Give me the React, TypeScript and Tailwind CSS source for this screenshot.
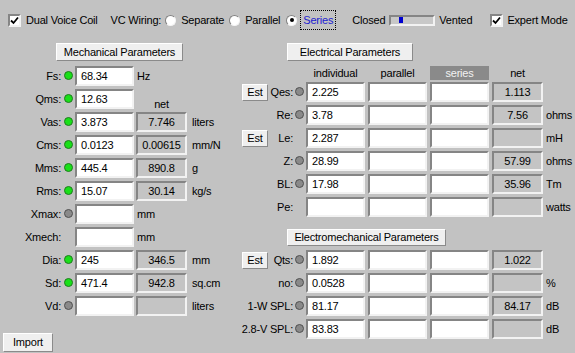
import type { FC, ReactNode } from 'react';

const sunken =
  'border-2 border-t-[#858585] border-l-[#858585] border-r-[#f2f2f2] border-b-[#f2f2f2]';

type LedKind = 'g' | 'x' | 'none';

const Led: FC<{ kind: LedKind }> = ({ kind }) => {
  if (kind === 'none') return <span className="inline-block h-[9px] w-[9px] shrink-0" />;
  return (
    <span
      className={
        kind === 'g'
          ? 'inline-block h-[9px] w-[9px] shrink-0 rounded-full border border-[#1f7a1f] bg-[#19e019]'
          : 'inline-block h-[9px] w-[9px] shrink-0 rounded-full border border-[#505050] bg-[#8a8a8a]'
      }
    />
  );
};

const Field: FC<{ value?: string; w?: string }> = ({ value = '', w = 'w-[59px]' }) => (
  <div className={`${sunken} ${w} flex h-[20px] shrink-0 items-center bg-white pl-[4px] leading-none`}>
    {value}
  </div>
);

const Net: FC<{ value?: string; w?: string }> = ({ value = '', w = 'w-[51px]' }) => (
  <div className={`${sunken} ${w} flex h-[20px] shrink-0 items-center justify-center bg-[#c4c4c4] leading-none`}>
    {value}
  </div>
);

const Btn: FC<{ children: ReactNode; className?: string }> = ({ children, className = '' }) => (
  <div
    className={`flex items-center justify-center border border-t-white border-l-white border-r-[#8a8a8a] border-b-[#8a8a8a] bg-[#efefef] leading-none ${className}`}
  >
    {children}
  </div>
);

const Check: FC = () => (
  <span className={`${sunken} flex h-[13px] w-[13px] items-center justify-center bg-white`}>
    <svg width="9" height="9" viewBox="0 0 9 9">
      <path d="M1 4.5 L3.5 7 L8 1.5" stroke="#000" strokeWidth="1.8" fill="none" />
    </svg>
  </span>
);

const Radio: FC<{ on?: boolean }> = ({ on }) => (
  <span className="flex h-[11px] w-[11px] items-center justify-center rounded-full border border-t-[#808080] border-l-[#808080] border-r-[#f4f4f4] border-b-[#f4f4f4] bg-white">
    {on && <span className="h-[4px] w-[4px] rounded-full bg-black" />}
  </span>
);

type LeftRow = {
  l: string;
  led: LedKind;
  v: string;
  net?: string;
  u?: string;
  unitInNet?: boolean;
  netLabel?: boolean;
};

const leftRows: LeftRow[] = [
  { l: 'Fs:', led: 'g', v: '68.34', u: 'Hz', unitInNet: true },
  { l: 'Qms:', led: 'g', v: '12.63', netLabel: true },
  { l: 'Vas:', led: 'g', v: '3.873', net: '7.746', u: 'liters' },
  { l: 'Cms:', led: 'g', v: '0.0123', net: '0.00615', u: 'mm/N' },
  { l: 'Mms:', led: 'g', v: '445.4', net: '890.8', u: 'g' },
  { l: 'Rms:', led: 'g', v: '15.07', net: '30.14', u: 'kg/s' },
  { l: 'Xmax:', led: 'x', v: '', u: 'mm', unitInNet: true },
  { l: 'Xmech:', led: 'none', v: '', u: 'mm', unitInNet: true },
  { l: 'Dia:', led: 'g', v: '245', net: '346.5', u: 'mm' },
  { l: 'Sd:', led: 'g', v: '471.4', net: '942.8', u: 'sq.cm' },
  { l: 'Vd:', led: 'x', v: '', net: '', u: 'liters' },
];

type RightRow = { l: string; est?: boolean; led: LedKind; v: string; net: string; u?: string };

const elecRows: RightRow[] = [
  { l: 'Qes:', est: true, led: 'x', v: '2.225', net: '1.113' },
  { l: 'Re:', led: 'x', v: '3.78', net: '7.56', u: 'ohms' },
  { l: 'Le:', est: true, led: 'none', v: '2.287', net: '', u: 'mH' },
  { l: 'Z:', led: 'x', v: '28.99', net: '57.99', u: 'ohms' },
  { l: 'BL:', led: 'x', v: '17.98', net: '35.96', u: 'Tm' },
  { l: 'Pe:', led: 'none', v: '', net: '', u: 'watts' },
];

const emRows: RightRow[] = [
  { l: 'Qts:', est: true, led: 'x', v: '1.892', net: '1.022' },
  { l: 'no:', led: 'x', v: '0.0528', net: '', u: '%' },
  { l: '1-W SPL:', led: 'x', v: '81.17', net: '84.17', u: 'dB' },
  { l: '2.8-V SPL:', led: 'x', v: '83.83', net: '', u: 'dB' },
];

const RightLine: FC<{ r: RightRow }> = ({ r }) => (
  <div className="flex h-[20px] items-center">
    <div className="flex w-[63px] items-center">
      {r.est && <Btn className="ml-[12px] h-[17px] w-[26px]">Est</Btn>}
      <span className="ml-auto whitespace-nowrap">{r.l}</span>
    </div>
    <span className="ml-[2px]">
      <Led kind={r.led} />
    </span>
    <div className="ml-[2px] flex gap-[3px]">
      <Field value={r.v} />
      <Field />
      <Field />
      <Net value={r.net} />
    </div>
    {r.u && <span className="ml-[3px]">{r.u}</span>}
  </div>
);

export default function App() {
  return (
    <div
      className="h-[353px] w-[575px] overflow-hidden bg-[#c2c2c2] text-[11px] tracking-[-0.2px] text-black"
      style={{ fontFamily: '"Liberation Sans", Arial, sans-serif' }}
    >
      <div className="flex h-[40px] items-center whitespace-nowrap pl-[8px]">
        <Check />
        <span className="ml-[5px]">Dual Voice Coil</span>
        <span className="ml-[13px]">VC Wiring:</span>
        <span className="ml-[4px]">
          <Radio />
        </span>
        <span className="ml-[5px]">Separate</span>
        <span className="ml-[5px]">
          <Radio />
        </span>
        <span className="ml-[5px]">Parallel</span>
        <span className="ml-[6px]">
          <Radio on />
        </span>
        <span className="ml-[3px] border border-dotted border-black px-[2px] py-[1px] text-[#2020d0]">Series</span>
        <span className="ml-[16px]">Closed</span>
        <span className={`${sunken} ml-[4px] flex h-[11px] w-[46px] items-center bg-[#c8c8c8] pl-[8px]`}>
          <span className="h-[6px] w-[4px] bg-[#0000d0]" />
        </span>
        <span className="ml-[4px]">Vented</span>
        <span className="ml-[18px]">
          <Check />
        </span>
        <span className="ml-[4px]">Expert Mode</span>
      </div>

      <div className="mt-[3px] flex">
        {/* left: mechanical */}
        <div className="w-[230px]">
          <Btn className="ml-[56px] h-[18px] w-[127px]">Mechanical Parameters</Btn>
          <div className="mt-[5px] flex flex-col gap-[3px]">
            {leftRows.map((r) => (
              <div key={r.l} className="flex h-[20px] items-center">
                <span className="w-[61px] text-right">{r.l}</span>
                <span className="ml-[3px]">
                  <Led kind={r.led} />
                </span>
                <span className="ml-[2px]">
                  <Field value={r.v} />
                </span>
                {r.unitInNet ? (
                  <span className="ml-[3px]">{r.u}</span>
                ) : r.netLabel ? (
                  <span className="ml-[2px] flex h-full w-[51px] items-end justify-center leading-[10px]">net</span>
                ) : (
                  <>
                    <span className="ml-[2px]">
                      <Net value={r.net} />
                    </span>
                    <span className="ml-[5px]">{r.u}</span>
                  </>
                )}
              </div>
            ))}
          </div>
          <Btn className="ml-[3px] mt-[17px] h-[19px] w-[50px]">Import</Btn>
        </div>

        {/* right: electrical */}
        <div className="flex-1">
          <Btn className="ml-[57px] h-[18px] w-[126px]">Electrical Parameters</Btn>
          <div className="mt-[5px] flex h-[14px] items-stretch pl-[76px]">
            <div className="flex gap-[3px]">
              <span className="w-[59px] text-center leading-[14px]">individual</span>
              <span className="w-[59px] text-center leading-[14px]">parallel</span>
              <span className="w-[59px] bg-[#8a8a8a] text-center leading-[14px] text-[#f2f2f2]">series</span>
              <span className="w-[51px] text-center leading-[14px]">net</span>
            </div>
          </div>
          <div className="mt-[2px] flex flex-col gap-[3px]">
            {elecRows.map((r) => (
              <RightLine key={r.l} r={r} />
            ))}
          </div>
          <Btn className="ml-[57px] mt-[12px] h-[17px] w-[159px]">Electromechanical Parameters</Btn>
          <div className="mt-[4px] flex flex-col gap-[3px]">
            {emRows.map((r) => (
              <RightLine key={r.l} r={r} />
            ))}
          </div>
        </div>
      </div>
    </div>
  );
}
